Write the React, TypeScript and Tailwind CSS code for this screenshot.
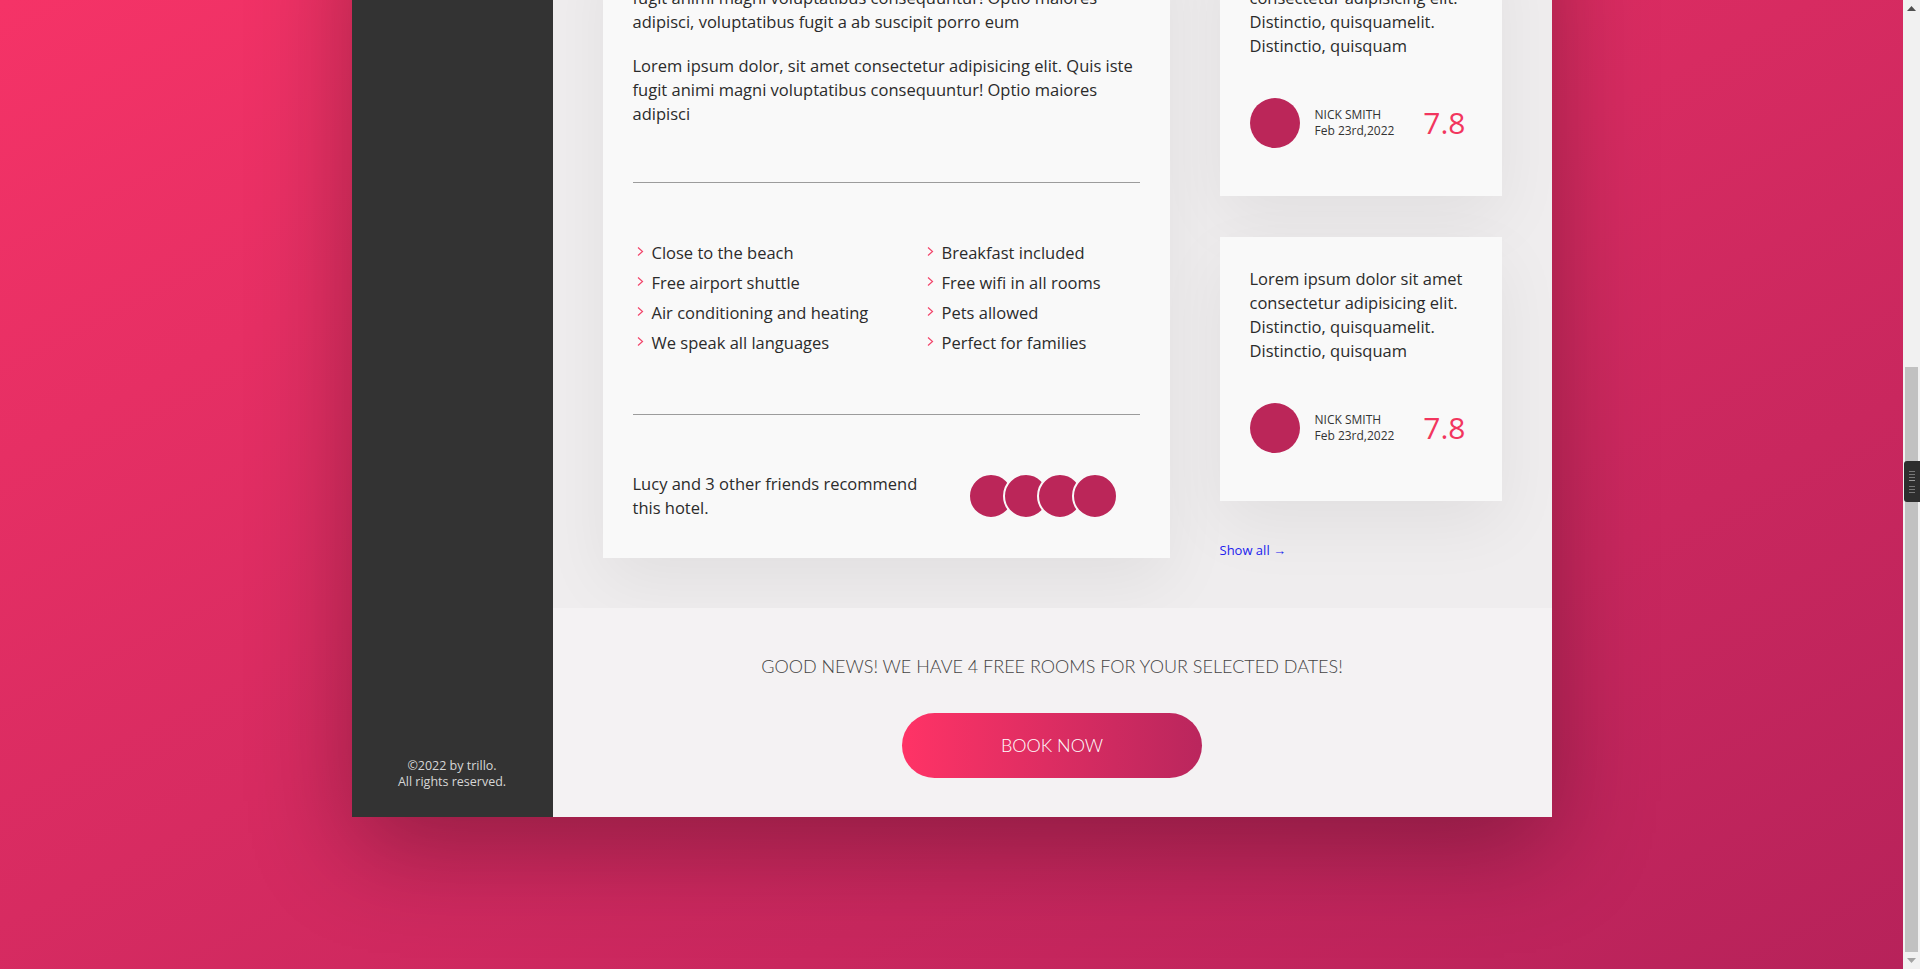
import React from "react";

const Chevron = () => (
  <svg width="19" height="30" viewBox="0 0 19 30" className="shrink-0">
    <polyline points="5,9.5 9.5,13.5 5,17.5" fill="none" stroke="#f2456a" strokeWidth="1.2" />
  </svg>
);

const features = [
  "Close to the beach",
  "Breakfast included",
  "Free airport shuttle",
  "Free wifi in all rooms",
  "Air conditioning and heating",
  "Pets allowed",
  "We speak all languages",
  "Perfect for families",
];

const ReviewCard = () => (
  <div className="bg-[#f9f9f9] shadow-[0_1.5rem_4rem_rgba(0,0,0,0.06)] px-[30px] pt-[30px] pb-[48px]">
    <p className="text-[16.5px] leading-6 text-[#2b2b2b] whitespace-nowrap">
      Lorem ipsum dolor sit amet
      <br />
      consectetur adipisicing elit.
      <br />
      Distinctio, quisquamelit.
      <br />
      Distinctio, quisquam
    </p>
    <div className="flex items-center mt-[40px]">
      <div className="w-[50px] h-[50px] rounded-full bg-[#bb2659] shrink-0" />
      <div className="ml-[15px] text-[12px] leading-4 text-[#333]">
        <div className="uppercase">Nick Smith</div>
        <div>Feb 23rd,2022</div>
      </div>
      <div className="ml-auto mr-[6px] text-[30px] leading-none text-[#f2365e] font-normal">7.8</div>
    </div>
  </div>
);

const Scrollbar = () => (
  <div className="w-[17px] h-full bg-[#f1f1f1] flex flex-col items-center relative shrink-0">
    <div className="h-[17px] w-full flex items-center justify-center">
      <svg width="9" height="5" viewBox="0 0 9 5">
        <polygon points="0,5 4.5,0 9,5" fill="#505050" />
      </svg>
    </div>
    <div className="flex-1 w-full flex flex-col items-center">
      <div className="mt-[350px] w-[13px] h-[585px] bg-[#c1c1c1]" />
    </div>
    <div className="h-[17px] w-full flex items-center justify-center">
      <svg width="9" height="5" viewBox="0 0 9 5">
        <polygon points="0,0 4.5,5 9,0" fill="#a3a3a3" />
      </svg>
    </div>
    <div className="absolute left-[1px] top-[461px] w-[16px] h-[41px] bg-[#2e2e2e] rounded-l-[3px] flex flex-col items-center justify-center gap-[2px]">
      <div className="w-[6px] h-px bg-[#777]" />
      <div className="w-[6px] h-px bg-[#777]" />
      <div className="w-[6px] h-px bg-[#777]" />
      <div className="w-[6px] h-px bg-[#999] mb-[3px]" />
      <div className="w-[6px] h-px bg-[#777]" />
      <div className="w-[6px] h-px bg-[#777]" />
      <div className="w-[6px] h-px bg-[#777]" />
    </div>
  </div>
);

export default function App() {
  return (
    <div className="h-[969px] w-full overflow-hidden flex font-['Open_Sans',sans-serif]">
      <div className="flex-1 min-w-0 h-full overflow-hidden bg-linear-to-br from-[#f53367] to-[#b7225a]">
        <div className="w-[1200px] mx-auto mt-[-118px] flex shadow-[0_32px_96px_rgba(0,0,0,0.3)]">
          <aside className="w-[201px] shrink-0 bg-[#333333] flex flex-col justify-end">
            <div className="text-[12.5px] leading-4 text-[#d6d6d6] text-center pb-[27px]">
              ©2022 by trillo.
              <br />
              All rights reserved.
            </div>
          </aside>
          <main className="flex-1 min-w-0 bg-[#efedee] flex flex-col">
            <div className="flex items-start gap-[50px] p-[50px]">
              <div className="w-[567px] shrink-0 bg-[#f9f9f9] shadow-[0_1.5rem_4rem_rgba(0,0,0,0.06)] px-[30px] pt-[30px] pb-[38px] text-[16.5px] text-[#2b2b2b]">
                <p className="leading-6 mb-[20px] whitespace-nowrap">
                  Lorem ipsum dolor, sit amet consectetur adipisicing elit. Quis iste
                  <br />
                  fugit animi magni voluptatibus consequuntur! Optio maiores
                  <br />
                  adipisci, voluptatibus fugit a ab suscipit porro eum
                </p>
                <p className="leading-6 whitespace-nowrap">
                  Lorem ipsum dolor, sit amet consectetur adipisicing elit. Quis iste
                  <br />
                  fugit animi magni voluptatibus consequuntur! Optio maiores
                  <br />
                  adipisci
                </p>
                <div className="mt-[56px] border-t border-[#9c9c9c]" />
                <ul className="mt-[55px] mb-[56px] grid grid-cols-[290px_1fr]">
                  {features.map((f) => (
                    <li key={f} className="flex items-start leading-[30px] whitespace-nowrap">
                      <Chevron />
                      <span>{f}</span>
                    </li>
                  ))}
                </ul>
                <div className="border-t border-[#9c9c9c]" />
                <div className="mt-[57px] flex items-center justify-between pr-[22px]">
                  <p className="w-[300px] leading-6 whitespace-nowrap">
                    Lucy and 3 other friends recommend
                    <br />
                    this hotel.
                  </p>
                  <div className="flex">
                    {[0, 1, 2, 3].map((i) => (
                      <div
                        key={i}
                        className={
                          i === 0
                            ? "w-[46px] h-[46px] rounded-full bg-[#bb2659] border-2 border-[#f9f9f9]"
                            : "w-[46px] h-[46px] rounded-full bg-[#bb2659] border-2 border-[#f9f9f9] ml-[-11.5px]"
                        }
                      />
                    ))}
                  </div>
                </div>
              </div>
              <div className="w-[282px] shrink-0 flex flex-col gap-[41px]">
                <ReviewCard />
                <ReviewCard />
                <a className="text-[13px] leading-4 text-[#2222ee] cursor-pointer">Show all →</a>
              </div>
            </div>
            <div className="bg-[#f4f2f3] pt-[46px] pb-[39px] flex flex-col items-center">
              <h2 className="text-[18px] leading-6 uppercase font-light text-[#444] font-['Lato',sans-serif]">
                Good news! We have 4 free rooms for your selected dates!
              </h2>
              <button className="mt-[35px] w-[300px] h-[65px] rounded-full bg-linear-to-r from-[#ff3366] to-[#ba265d] text-white text-[18px] font-light uppercase font-['Lato',sans-serif]">
                Book now
              </button>
            </div>
          </main>
        </div>
      </div>
      <Scrollbar />
    </div>
  );
}
